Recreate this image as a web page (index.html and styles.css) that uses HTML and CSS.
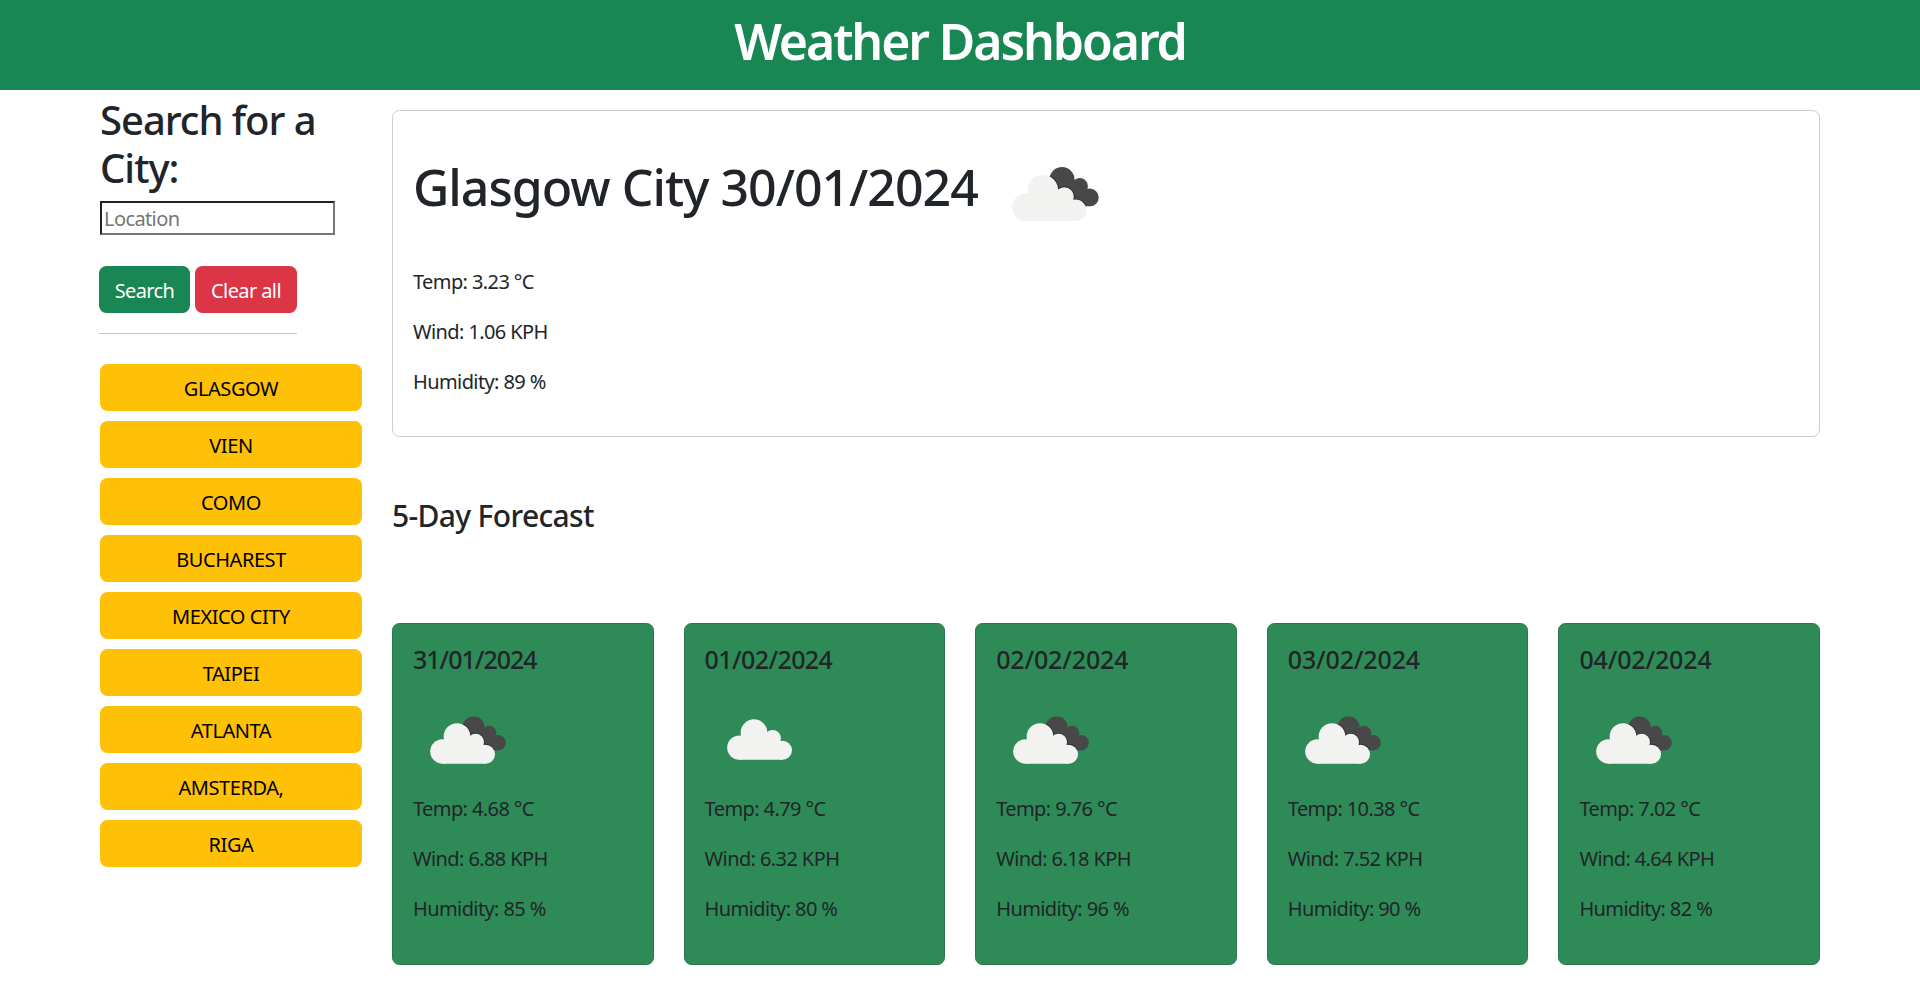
FILE: index.html
```html
<!DOCTYPE html>
<html lang="en">
<head>
<meta charset="utf-8">
<title>Weather Dashboard</title>
<link rel="stylesheet" href="styles.css">
</head>
<body>
<svg class="defs" width="0" height="0" aria-hidden="true">
  <defs>
    <g id="cloud">
      <circle cx="68" cy="153" r="36.5"/>
      <circle cx="112" cy="108" r="40"/>
      <circle cx="168" cy="125" r="25"/>
      <circle cx="197.500" cy="161" r="28.500"/>
      <path d="M68 189.500V125L74 116L112 90L152 106L175 130L197.500 134V189.500Z"/>
    </g>
    <clipPath id="back">
      <circle cx="162" cy="80" r="33"/>
      <circle cx="209" cy="97" r="21"/>
      <circle cx="235" cy="127" r="23.500"/>
      <path d="M162 60L192 82L226 103L235 106V150H180L130 100Z"/>
    </clipPath>
    <symbol id="clouds" viewBox="31 47 228 143">
      <g clip-path="url(#back)">
        <rect x="100" y="40" width="160" height="112" fill="#484849"/>
        <use href="#cloud" fill="#2c2d2f" stroke="#2c2d2f" stroke-width="5"/>
      </g>
      <use href="#cloud" fill="#f2f2f1"/>
    </symbol>
    <symbol id="single" viewBox="31 67 196 123"><use href="#cloud" fill="#f2f2f1"/></symbol>
  </defs>
</svg>

<header class="header"><h1>Weather Dashboard</h1></header>

<div class="layout">
  <aside class="sidebar">
    <h2>Search for a City:</h2>
    <input class="location" type="text" placeholder="Location">
    <div class="actions">
      <button class="btn search">Search</button>
      <button class="btn clear">Clear all</button>
    </div>
    <hr>
    <div class="history">
      <button class="btn city">GLASGOW</button>
      <button class="btn city">VIEN</button>
      <button class="btn city">COMO</button>
      <button class="btn city">BUCHAREST</button>
      <button class="btn city">MEXICO CITY</button>
      <button class="btn city">TAIPEI</button>
      <button class="btn city">ATLANTA</button>
      <button class="btn city">AMSTERDA,</button>
      <button class="btn city">RIGA</button>
    </div>
  </aside>

  <main class="main">
    <section class="today">
      <div class="today-head">
        <h1>Glasgow City 30/01/2024</h1>
        <svg class="today-icon"><use href="#clouds"/></svg>
      </div>
      <p>Temp: 3.23 °C</p>
      <p>Wind: 1.06 KPH</p>
      <p>Humidity: 89 %</p>
    </section>

    <h4>5-Day Forecast</h4>

    <section class="forecast">
      <article class="day">
        <h5 class="tighter">31/01/2024</h5>
        <svg class="icon"><use href="#clouds"/></svg>
        <p>Temp: 4.68 °C</p><p>Wind: 6.88 KPH</p><p>Humidity: 85 %</p>
      </article>
      <article class="day">
        <h5 class="tight">01/02/2024</h5>
        <svg class="icon icon-single"><use href="#single"/></svg>
        <p>Temp: 4.79 °C</p><p>Wind: 6.32 KPH</p><p>Humidity: 80 %</p>
      </article>
      <article class="day">
        <h5>02/02/2024</h5>
        <svg class="icon"><use href="#clouds"/></svg>
        <p>Temp: 9.76 °C</p><p>Wind: 6.18 KPH</p><p>Humidity: 96 %</p>
      </article>
      <article class="day">
        <h5>03/02/2024</h5>
        <svg class="icon"><use href="#clouds"/></svg>
        <p>Temp: 10.38 °C</p><p>Wind: 7.52 KPH</p><p>Humidity: 90 %</p>
      </article>
      <article class="day">
        <h5>04/02/2024</h5>
        <svg class="icon"><use href="#clouds"/></svg>
        <p>Temp: 7.02 °C</p><p>Wind: 4.64 KPH</p><p>Humidity: 82 %</p>
      </article>
    </section>
  </main>
</div>
</body>
</html>
```

FILE: styles.css
```css
* { box-sizing: border-box; }

body {
  margin: 0;
  background: #fff;
  color: #212529;
  font-family: "Noto Sans", "Open Sans", sans-serif;
  font-size: 20px;
  line-height: 30px;
  letter-spacing: -0.6px;
}

.defs { display: block; height: 0; }

h1, h2, h4, h5, p { margin: 0; font-weight: 500; }
p { font-weight: 400; margin-bottom: 20px; }

.header {
  height: 90px;
  padding-top: 11px;
  background: #198754;
  color: #fff;
  text-align: center;
}
h1 { font-size: 50px; line-height: 60px; letter-spacing: -1px; white-space: nowrap; }
.header h1 { font-weight: 600; letter-spacing: -2.1px; }

.layout {
  display: flex;
  gap: 30px;
  padding: 0 100px;
}

.sidebar { width: 262px; padding-top: 6px; }
.sidebar h2 { font-size: 40px; line-height: 48px; letter-spacing: -1.03px; }

.location {
  display: block;
  width: 235px;
  height: 34px;
  margin-top: 9px;
  padding: 1px 2px;
  border: 2px solid;
  border-color: #212225 #767676 #767676 #212225;
  background: #fff;
  font: inherit;
  letter-spacing: -0.6px;
}
.location::placeholder { color: #757575; opacity: 1; }

.btn {
  display: block;
  padding: 2px 0 0;
  border: 0;
  border-radius: 7.5px;
  font: inherit;
  letter-spacing: inherit;
}

.actions { display: flex; gap: 5px; margin: 31px 0 0 -1px; }
.actions .btn { height: 47px; color: #fff; }
.search { width: 91px; background: #198754; }
.clear { width: 102px; background: #dc3545; }

hr {
  width: 198px;
  height: 1px;
  margin: 20px 0 0 -1px;
  border: 0;
  background: #c7c8c9;
}

.history {
  display: flex;
  flex-direction: column;
  gap: 10px;
  margin-top: 30px;
}
.city { height: 47px; background: #ffc107; color: #000; letter-spacing: -0.43px; }

.main { flex: 1; padding-top: 20px; }

.today {
  height: 327px;
  padding: 20px;
  border: 1px solid #cbccce;
  border-radius: 7.5px;
}
.today-head { display: flex; height: 136px; padding-top: 26px; }
.today-head h1 { width: 599px; }
.today-icon { width: 87px; height: 54.5px; margin-top: 9.5px; }

h4 { margin-top: 61px; font-size: 30px; line-height: 36px; letter-spacing: -0.65px; }

.forecast {
  display: grid;
  grid-template-columns: repeat(5, 1fr);
  gap: 30px;
  margin-top: 89px;
}
.day {
  height: 342px;
  padding: 20px;
  border: 1px solid #27764c;
  border-radius: 7.5px;
  background: #2e8b57;
}
h5 { font-size: 25px; line-height: 30px; letter-spacing: -0.15px; }
.tight { letter-spacing: -0.6px; }
.tighter { letter-spacing: -1px; }
.icon { display: block; width: 76px; height: 48px; margin: 42px 0 30px 17px; }
.icon-single { width: 65.3px; height: 41px; margin: 45px 0 34px 22px; }
```
